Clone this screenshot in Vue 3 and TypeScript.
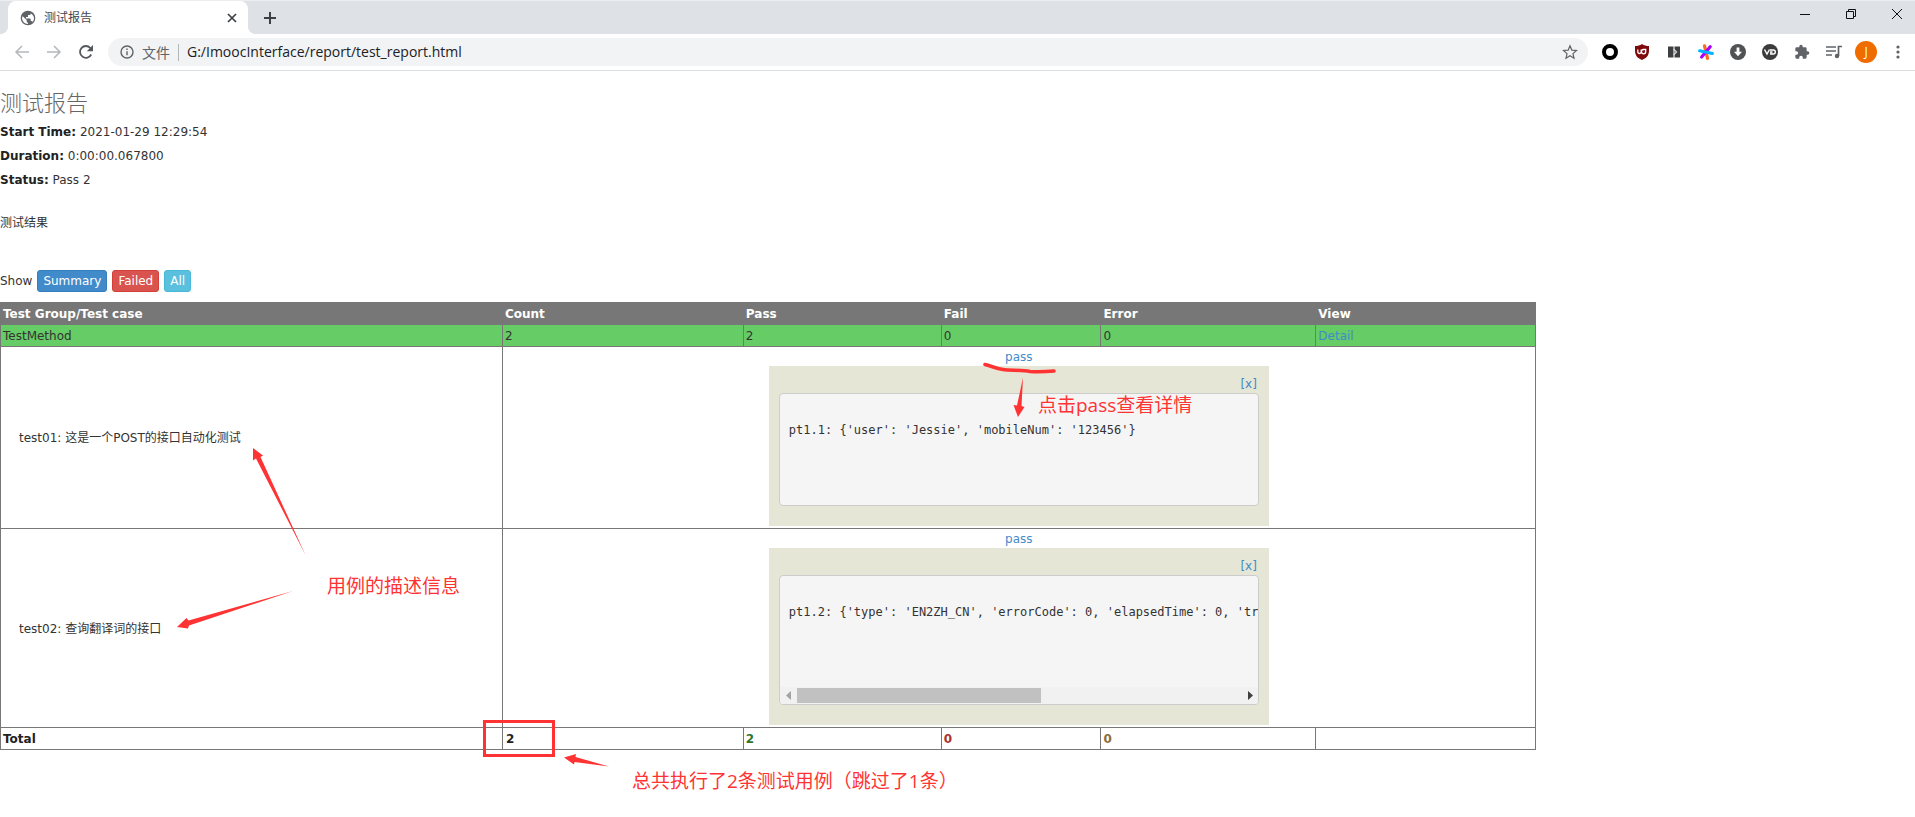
<script setup lang="ts">
interface TestCase {
  id: string
  title: string
  output: string
  scrolls: boolean
}

const attributes: { label: string; value: string }[] = [
  { label: 'Start Time:', value: '2021-01-29 12:29:54' },
  { label: 'Duration:', value: '0:00:00.067800' },
  { label: 'Status:', value: 'Pass 2' },
]

const columns: string[] = ['Test Group/Test case', 'Count', 'Pass', 'Fail', 'Error', 'View']

const cases: TestCase[] = [
  {
    id: 'pt1.1',
    title: 'test01: 这是一个POST的接口自动化测试',
    output: "pt1.1: {'user': 'Jessie', 'mobileNum': '123456'}",
    scrolls: false,
  },
  {
    id: 'pt1.2',
    title: 'test02: 查询翻译词的接口',
    output: "pt1.2: {'type': 'EN2ZH_CN', 'errorCode': 0, 'elapsedTime': 0, 'tra",
    scrolls: true,
  },
]
</script>

<template>
  <div class="window">
    <header class="chrome">
      <div class="tabstrip">
        <div class="tab">
          <svg class="i16" viewBox="0 0 24 24"><path fill="#5f6368" d="M12 1a11 11 0 1 0 0 22 11 11 0 0 0 0-22zM4 9.500l6 5.500v2c0 1.100.9 2 2 2v1.900C7 20.900 3.100 17 3.100 12c0-.9.300-1.700.900-2.500zm14.900 8.600c-.3-.9-1-1.500-1.900-1.500h-1v-3c0-.6-.4-1-1-1H9v-2h2c.6 0 1-.4 1-1V7.600h2c1.100 0 2-.9 2-2v-.5c3 1.200 5 4 5 7 0 2.300-.8 4.400-2.100 6z" /></svg>
          <span class="tab-title">测试报告</span>
          <button class="tab-close" type="button" aria-label="Close tab">
            <svg class="i10" viewBox="0 0 10 10"><path d="M1 1l8 8M9 1l-8 8" stroke="#3c4043" stroke-width="1.700" /></svg>
          </button>
        </div>
        <button class="new-tab" type="button" aria-label="New tab">
          <svg class="i12" viewBox="0 0 12 12"><path d="M6 0v12M0 6h12" stroke="#3c4043" stroke-width="2" /></svg>
        </button>
        <div class="win-controls">
          <button type="button" aria-label="Minimize"><svg class="i12" viewBox="0 0 12 12"><path d="M1 6.500h10" stroke="#111" /></svg></button>
          <button type="button" aria-label="Restore"><svg class="i12" viewBox="0 0 12 12"><path d="M1.500 3.500h7v7h-7zM3.500 3.500v-2h7v7h-2" fill="none" stroke="#111" /></svg></button>
          <button type="button" aria-label="Close"><svg class="i12" viewBox="0 0 12 12"><path d="M1 1l10 10M11 1L1 11" stroke="#111" /></svg></button>
        </div>
      </div>

      <div class="toolbar">
        <button class="tool" type="button" aria-label="Back"><svg class="i16" viewBox="0 0 16 16"><path d="M15 8H2M8 2L2 8l6 6" fill="none" stroke="#b5b7ba" stroke-width="1.500" /></svg></button>
        <button class="tool" type="button" aria-label="Forward"><svg class="i16" viewBox="0 0 16 16"><path d="M1 8h13M8 2l6 6-6 6" fill="none" stroke="#b5b7ba" stroke-width="1.500" /></svg></button>
        <button class="tool" type="button" aria-label="Reload"><svg class="i16" viewBox="0 0 16 16"><path d="M13.200 10.500A5.900 5.900 0 1 1 12.300 4L14 5.700" fill="none" stroke="#54585c" stroke-width="1.800" /><path d="M15 1v6.200H8.800z" fill="#54585c" /></svg></button>
        <div class="omnibox">
          <button class="site" type="button">
            <svg class="i14" viewBox="0 0 14 14"><circle cx="7" cy="7" r="6" fill="none" stroke="#5f6368" stroke-width="1.400" /><path d="M7 6.200v4M7 3.500v1.500" stroke="#5f6368" stroke-width="1.400" /></svg>
            <span>文件</span>
          </button>
          <input class="url" type="text" aria-label="Address" value="G:/ImoocInterface/report/test_report.html" />
          <button class="star" type="button" aria-label="Bookmark"><svg class="i16" viewBox="0 0 16 16"><path d="M8 1.800l1.800 4.300 4.700.400-3.500 3.100 1 4.600-4-2.500-4 2.500 1-4.600-3.500-3.100 4.700-.4z" fill="none" stroke="#5f6368" stroke-width="1.200" /></svg></button>
        </div>
        <button class="tool" type="button" aria-label="Circle extension"><svg class="i16" viewBox="0 0 16 16"><circle cx="8" cy="8" r="6" fill="none" stroke="#000" stroke-width="4" /></svg></button>
        <button class="tool" type="button" aria-label="Blocker"><svg class="i16" viewBox="0 0 16 16"><path d="M8 0c2 1.500 4.500 2 7 2v5c0 4.500-3 7.500-7 9-4-1.500-7-4.500-7-9V2c2.500 0 5-.5 7-2z" fill="#7f0a0e" /><path d="M3.800 5.500v2.300a1.700 1.700 0 0 0 3.400 0V5.500M7.500 7.500a2 2 0 0 1 2-2h2.200v2.200a2 2 0 0 1-4.200 0" fill="none" stroke="#fff" stroke-width="1.300" /></svg></button>
        <button class="tool" type="button" aria-label="Split extension"><svg class="i16" viewBox="0 0 16 16"><path d="M2 2.500h5.500v11H2zM8.500 2.500H14v11H8.500z" fill="#3d3f41" /><path d="M7.500 5l3 3-3 3" fill="none" stroke="#d6d8da" stroke-width="1.300" /></svg></button>
        <button class="tool" type="button" aria-label="Asterisk extension"><svg class="i16" viewBox="0 0 16 16"><g stroke-width="3.200" stroke-linecap="round"><path d="M6.500 1.800l3 12.500" stroke="#ff6a1f" /><path d="M12.200 2.800L3.600 13" stroke="#a800ff" /><path d="M1.700 6.800l12.600 2.700" stroke="#00b4ff" /></g></svg></button>
        <button class="tool" type="button" aria-label="Downloader"><svg class="i16" viewBox="0 0 16 16"><circle cx="8" cy="8" r="8" fill="#505254" /><path d="M6.600 3.500h2.800v4.200H12l-4 4.600-4-4.600h2.600z" fill="#fff" /></svg></button>
        <button class="tool" type="button" aria-label="Video extension"><svg class="i16" viewBox="0 0 16 16"><circle cx="8" cy="8" r="8" fill="#3c3c3c" /><path d="M2.500 5.500L5 10l2.500-4.500M8 6h3.300a2 2 0 0 1 0 4H8.800V8h1.700" fill="none" stroke="#fff" stroke-width="1.400" /></svg></button>
        <button class="tool" type="button" aria-label="Extensions"><svg class="i16" viewBox="0 0 24 24"><path fill="#5f6368" d="M20.500 11H19V7a2 2 0 0 0-2-2h-4V3.500a2.500 2.500 0 0 0-5 0V5H4a2 2 0 0 0-2 2v3.800h1.500a2.700 2.700 0 0 1 0 5.400H2V20c0 1.100.9 2 2 2h3.800v-1.500a2.700 2.700 0 0 1 5.400 0V22H17a2 2 0 0 0 2-2v-4h1.500a2.500 2.500 0 0 0 0-5z" /></svg></button>
        <button class="tool" type="button" aria-label="Media"><svg class="i16" viewBox="0 0 16 16"><path d="M0 3h10M0 7h10M0 11h6M12.500 12V2.500H16" fill="none" stroke="#5f6368" stroke-width="1.700" /><circle cx="11" cy="12" r="2.200" fill="#5f6368" /></svg></button>
        <button class="tool" type="button" aria-label="Profile"><span class="avatar">J</span></button>
        <button class="tool" type="button" aria-label="Menu"><svg class="i16" viewBox="0 0 16 16"><g fill="#5f6368"><circle cx="8" cy="3" r="1.600" /><circle cx="8" cy="8" r="1.600" /><circle cx="8" cy="13" r="1.600" /></g></svg></button>
      </div>
    </header>

    <main class="report">
      <h1>测试报告</h1>
      <div class="attributes">
        <p v-for="a in attributes" :key="a.label"><strong>{{ a.label }}</strong> {{ a.value }}</p>
      </div>
      <p class="description">测试结果</p>

      <div class="filters">
        <span>Show</span>
        <button class="btn primary" type="button">Summary</button>
        <button class="btn danger" type="button">Failed</button>
        <button class="btn info" type="button">All</button>
      </div>

      <table>
        <colgroup>
          <col class="c-name" /><col class="c-count" /><col class="c-pass" /><col class="c-fail" /><col class="c-error" /><col />
        </colgroup>
        <thead>
          <tr><th v-for="c in columns" :key="c" scope="col">{{ c }}</th></tr>
        </thead>
        <tbody>
          <tr class="group">
            <td>TestMethod</td><td>2</td><td>2</td><td>0</td><td>0</td>
            <td><a href="#detail">Detail</a></td>
          </tr>
          <tr v-for="t in cases" :key="t.id">
            <td><div class="case">{{ t.title }}</div></td>
            <td class="details" colspan="5">
              <div class="result">
                <a :href="'#' + t.id">pass</a>
                <div class="popup">
                  <a class="dismiss" href="#close">[x]</a>
                  <div class="output">
                    <pre>{{ '\n' + t.output + '\n\n\n\n' }}</pre>
                    <div v-if="t.scrolls" class="scrollbar">
                      <svg class="arrow" viewBox="0 0 17 17"><path d="M11 4v9L6 8.500z" fill="#a3a3a3" /></svg>
                      <div class="track"><div class="thumb"></div></div>
                      <svg class="arrow" viewBox="0 0 17 17"><path d="M7 4v9l5-4.500z" fill="#404040" /></svg>
                    </div>
                  </div>
                </div>
              </div>
            </td>
          </tr>
        </tbody>
        <tfoot>
          <tr>
            <td>Total</td>
            <td><span class="boxed">2</span></td>
            <td class="ok">2</td><td class="fail">0</td><td class="error">0</td><td></td>
          </tr>
        </tfoot>
      </table>
    </main>

    <svg class="marks" width="1200" height="800" viewBox="0 0 1200 800" aria-hidden="true">
      <g fill="#ff3333">
        <path d="M253 448L263 455.500 260.500 457 305.500 555 256 458.500 253 460.500z" />
        <path d="M177 627L186.500 618 188.500 620.500 293 591 189 625.500 188 628.500z" />
        <path d="M1023 377.500L1021.500 406 1024.500 407 1018 417 1013.500 405 1017 405.500z" />
        <path d="M564 757.500L576 754 575.500 757 609 766.500 574.500 762 574 764.500z" />
      </g>
      <g fill="none" stroke="#ff3333">
        <path d="M985 364.500C991 366 996 368.500 1003 369.500S1022 370 1030 371.500Q1042 372 1054 371" stroke-width="3.500" stroke-linecap="round" />
        <path d="M484.500 721.500h69v34h-69z" stroke-width="3" />
      </g>
    </svg>
    <span class="note note-click">点击pass查看详情</span>
    <span class="note note-desc">用例的描述信息</span>
    <span class="note note-total">总共执行了2条测试用例（跳过了1条）</span>
  </div>
</template>

<style>
body {
  margin: 0;
  background: #fff;
}
</style>

<style scoped>
* {
  box-sizing: border-box;
}
.window {
  position: relative;
  min-height: 100vh;
  overflow: hidden;
  font: 12px/17px "DejaVu Sans", "Noto Sans CJK SC", sans-serif;
  color: #333;
}
button {
  font: inherit;
  color: inherit;
  border: 0;
  padding: 0;
  background: none;
}
svg {
  display: block;
  flex: none;
}
.i10 { width: 10px; height: 10px; }
.i12 { width: 12px; height: 12px; }
.i14 { width: 14px; height: 14px; }
.i16 { width: 16px; height: 16px; }

/* Browser frame */
.chrome {
  font-family: "Open Sans", "Noto Sans CJK SC", sans-serif;
  border-bottom: 1px solid #dcdde1;
}
.tabstrip {
  display: flex;
  height: 34px;
  padding-left: 8px;
  background: #dee1e6;
  border-top: 1px solid #eceef1;
}
.tab {
  position: relative;
  display: flex;
  align-items: center;
  gap: 8px;
  width: 240px;
  padding: 0 10px 0 12px;
  background: #fff;
  border-radius: 8px 8px 0 0;
}
.tab::before,
.tab::after {
  content: "";
  position: absolute;
  bottom: 0;
  width: 8px;
  height: 8px;
}
.tab::before {
  left: -8px;
  background: radial-gradient(circle at 0 0, #dee1e6 8px, #fff 8px);
}
.tab::after {
  right: -8px;
  background: radial-gradient(circle at 100% 0, #dee1e6 8px, #fff 8px);
}
.tab-title {
  flex: 1;
  color: #45494d;
}
.new-tab {
  display: grid;
  place-items: center;
  width: 28px;
  margin-left: 8px;
}
.win-controls {
  display: flex;
  align-items: flex-start;
  gap: 10px;
  margin-left: auto;
}
.win-controls button {
  display: grid;
  place-items: center;
  width: 36px;
  height: 26px;
}
.tab-close {
  display: grid;
  place-items: center;
  width: 12px;
  height: 12px;
}
.toolbar {
  display: flex;
  align-items: center;
  height: 36px;
  padding: 0 1px 0 6px;
}
.tool {
  display: grid;
  place-items: center;
  flex: none;
  width: 32px;
  height: 28px;
}
.omnibox {
  display: flex;
  align-items: center;
  flex: 1;
  height: 28px;
  margin: 0 6px;
  padding: 0 10px 0 12px;
  border-radius: 14px;
  background: #f1f3f4;
}
.site {
  display: flex;
  align-items: center;
  gap: 8px;
  padding-right: 8px;
  border-right: 1px solid #b4b7ba;
  font-size: 14px;
  color: #5f6368;
}
.url {
  flex: 1;
  min-width: 0;
  border: 0;
  padding: 0 0 0 8px;
  background: none;
  outline: 0;
  font: 14px/20px "Open Sans", sans-serif;
  color: #202124;
}
.avatar {
  width: 22px;
  height: 22px;
  border-radius: 50%;
  background: #ef6c00;
  color: #fff;
  line-height: 22px;
  text-align: center;
}

/* Report */
.report {
  padding-top: 21px;
}
h1 {
  margin: 0 0 8px;
  font-size: 22px;
  line-height: 24px;
  font-weight: 300;
  color: #666;
}
p {
  margin: 0;
}
.attributes {
  display: grid;
  gap: 7px;
}
.attributes strong {
  color: #222;
}
.description {
  margin: 26px 0 38px;
}
.filters {
  display: flex;
  align-items: center;
  gap: 5px;
  margin-bottom: 10px;
}
.btn {
  height: 22px;
  padding: 0 5px;
  border: 1px solid;
  border-radius: 3px;
  line-height: 20px;
  color: #fff;
}
.primary { background: #428bca; border-color: #357ebd; }
.danger { background: #d9534f; border-color: #d43f3a; }
.info { background: #5bc0de; border-color: #46b8da; }

table {
  width: 80.2%;
  table-layout: fixed;
  border-collapse: collapse;
}
.c-name { width: 32.7%; }
.c-count { width: 15.7%; }
.c-pass { width: 12.9%; }
.c-fail { width: 10.4%; }
.c-error { width: 14%; }
th,
td {
  padding: 3px 2px 1px;
  border: 1px solid #777;
  text-align: left;
}
th {
  background: #777;
  color: #fff;
}
td.details {
  padding: 2px;
}
.group td {
  background: #66cc66;
}
a {
  color: #428bca;
  text-decoration: none;
}
.case {
  margin-left: 16px;
}
.result {
  display: flex;
  flex-direction: column;
  align-items: center;
}
.popup {
  display: flex;
  flex-direction: column;
  width: 500px;
  padding: 10px 10px 20px;
  background: #e6e6d6;
}
.dismiss {
  align-self: flex-end;
  margin-right: 2px;
}
.output {
  border: 1px solid #ccc;
  border-radius: 4px;
  background: #f5f5f5;
  overflow: hidden;
}
pre {
  margin: 0;
  padding: 8px 0 8px 9px;
  font: 12px/19px "DejaVu Sans Mono", monospace;
  overflow: hidden;
}
.scrollbar {
  display: flex;
  height: 17px;
  background: #f1f1f1;
}
.arrow {
  width: 17px;
  height: 17px;
}
.track {
  flex: 1;
  padding: 1px 0;
}
.thumb {
  width: 55%;
  height: 15px;
  background: #c1c1c1;
}
tfoot td {
  font-weight: bold;
  color: #222;
}
.boxed {
  margin-left: 1px;
}
tfoot .ok { color: #2f7531; }
tfoot .fail { color: #a93230; }
tfoot .error { color: #8a6d3b; }

/* Annotations laid over the page */
.marks {
  position: absolute;
  top: 0;
  left: 0;
  pointer-events: none;
}
.note {
  position: absolute;
  font: 19px/24px "Open Sans", "Noto Sans CJK SC", sans-serif;
  color: #ff3333;
  white-space: nowrap;
}
.note-click { left: 1038px; top: 393px; }
.note-desc { left: 327px; top: 574px; }
.note-total { left: 632px; top: 769px; }
</style>
